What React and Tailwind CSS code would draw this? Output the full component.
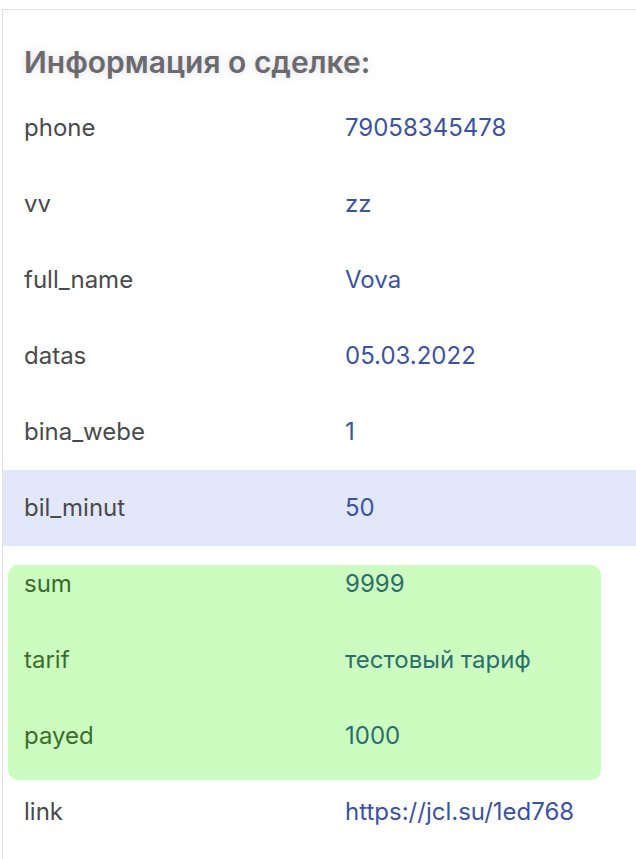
import React from 'react';

const ROWS = [
  ['phone', '79058345478'],
  ['vv', 'zz'],
  ['full_name', 'Vova'],
  ['datas', '05.03.2022'],
  ['bina_webe', '1'],
];

const PAID = [
  ['sum', '9999'],
  ['tarif', 'тестовый тариф'],
  ['payed', '1000'],
];

const Row = ({ label, value, className = '', labelClass = 'text-[#4a4a4c]', valueClass = 'text-[#3a53a4]' }) => (
  <div className={`flex h-[76px] items-center ${className}`}>
    <span className={`w-[342px] shrink-0 pl-[21px] ${labelClass}`}>{label}</span>
    <span className={valueClass}>{value}</span>
  </div>
);

export default function App() {
  return (
    <div className="min-h-[859px] bg-white pt-[9px] font-['Inter','Noto_Sans',sans-serif] text-[24px]">
      <div className="ml-[2px] min-h-[850px] border-l border-t border-[#e2e2e4] pb-10">
        <h2 className="pl-[21px] pt-[34px] text-[30px] font-semibold leading-[36px] text-[#6b6b6f] [text-shadow:0_0_8px_rgba(120,120,140,0.25)]">
          Информация о сделке:
        </h2>
        <div className="mt-[10px]">
          {ROWS.map(([label, value]) => (
            <Row key={label} label={label} value={value} />
          ))}
          <Row label="bil_minut" value="50" className="bg-[#e2e8fa]" />
          <div className="mb-[-6px] ml-[5px] mr-[35px] mt-[19px] flow-root rounded-[10px] bg-[#ccfcc0] pb-[6px]">
            <div className="-mt-[19px] -ml-[5px]">
              {PAID.map(([label, value]) => (
                <Row key={label} label={label} value={value} labelClass="text-[#3b6e2c]" valueClass="text-[#2b6f6c]" />
              ))}
            </div>
          </div>
          <Row label="link" value="https://jcl.su/1ed768" />
        </div>
      </div>
    </div>
  );
}
